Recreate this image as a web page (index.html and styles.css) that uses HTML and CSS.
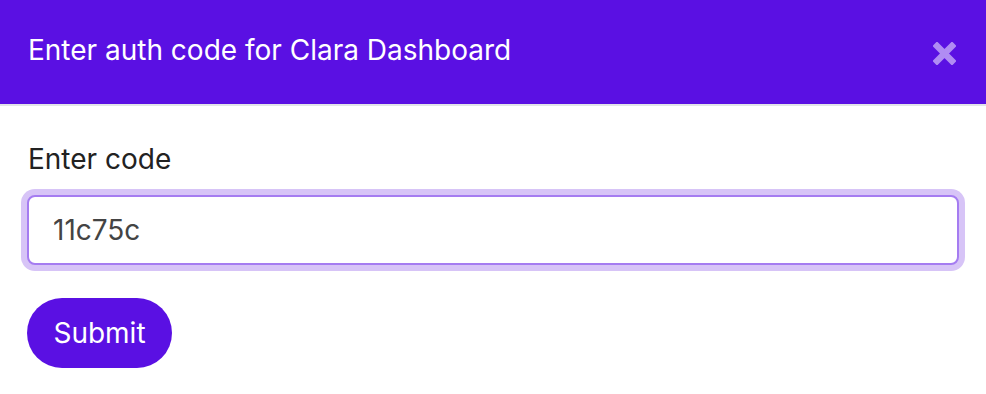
FILE: index.html
```html
<!DOCTYPE html>
<html>
<head>
<meta charset="utf-8">
<link rel="stylesheet" href="styles.css">
</head>
<body>
<div class="modal">
  <header class="modal-header">
    <h1 class="modal-title">Enter auth code for Clara Dashboard</h1>
    <button class="close-btn" aria-label="Close">
      <svg width="23" height="23" viewBox="0 0 23 23"><path d="M4 4 L19 19 M19 4 L4 19" stroke="#b08cf3" stroke-width="6.5" stroke-linecap="square"/></svg>
    </button>
  </header>
  <div class="modal-body">
    <label class="field-label" for="code">Enter code</label>
    <div class="input-ring">
      <input id="code" class="code-input" type="text" value="11c75c">
    </div>
    <button class="submit-btn">Submit</button>
  </div>
</div>
</body>
</html>
```
FILE: styles.css
```css
* { box-sizing: border-box; }
html, body { margin: 0; padding: 0; background: #fff; }
body { font-family: Inter, "Noto Sans", sans-serif; }
.modal { width: 986px; }
.modal-header {
  height: 106px;
  background: #5a10e3;
  border-bottom: 2px solid #e2e4e9;
  display: flex;
  align-items: center;
  justify-content: space-between;
  padding: 0 30px 0 28px;
}
.modal-title {
  margin: 0;
  color: #fff;
  font-weight: 400;
  font-size: 28px;
  line-height: 1;
  padding-bottom: 4px;
}
.close-btn {
  border: 0; background: none; padding: 0;
  width: 23px; height: 23px; display: flex;
  margin-top: 2px;
}
.modal-body {
  padding: 37px 21px 0 21px;
  display: flex;
  flex-direction: column;
  align-items: flex-start;
}
.field-label {
  font-size: 28px;
  line-height: 32px;
  color: #222;
  padding-left: 7px;
  margin-bottom: 14px;
}
.input-ring {
  width: 944px;
  padding: 6px;
  border-radius: 14px;
  background: #d7c4f7;
}
.code-input {
  display: block;
  width: 100%;
  height: 70px;
  border: 2px solid #a57cf1;
  border-radius: 8px;
  padding: 0 24px;
  font-family: Inter, "Noto Sans", sans-serif;
  font-size: 28px;
  color: #444;
  outline: none;
  background: #fff;
}
.submit-btn {
  margin-top: 27px;
  margin-left: 6px;
  height: 70px;
  width: 145px;
  border: 0;
  border-radius: 35px;
  background: #5a10e3;
  color: #fff;
  font-family: Inter, "Noto Sans", sans-serif;
  font-size: 28px;
  padding: 0;
}
```
